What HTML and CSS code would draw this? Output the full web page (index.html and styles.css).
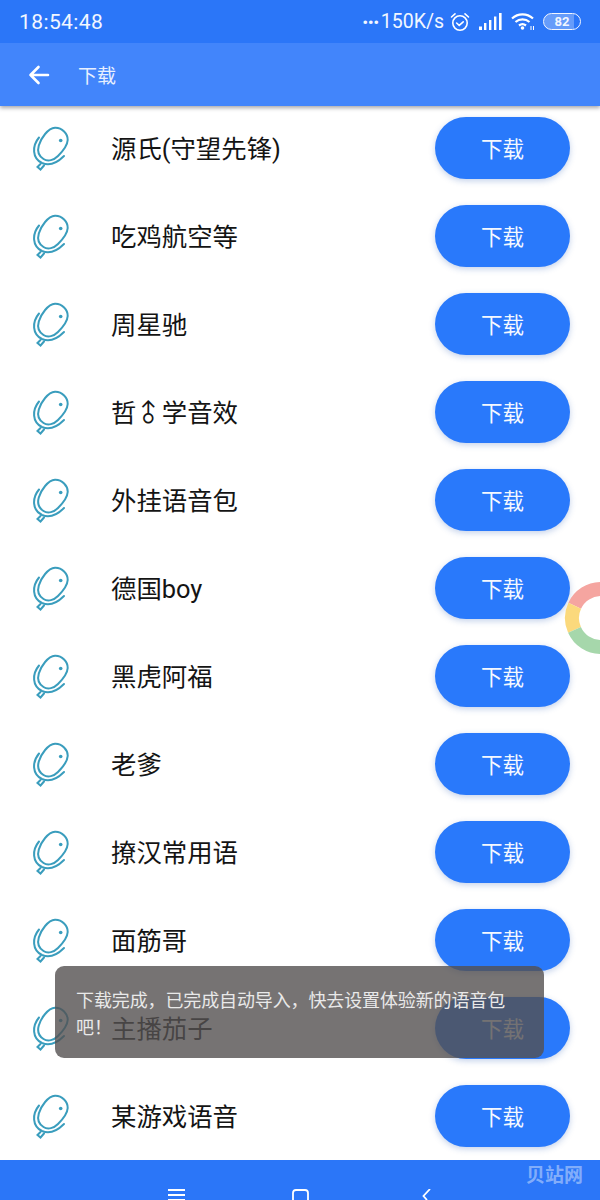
FILE: index.html
```html
<!DOCTYPE html>
<html lang="zh">
<head>
<meta charset="utf-8">
<title>下载</title>
<link rel="stylesheet" href="styles.css">
</head>
<body>
<svg class="defs" width="0" height="0" aria-hidden="true">
  <symbol id="mic" viewBox="0 0 40 45">
    <g fill="none" stroke="#3a9dbd" stroke-width="2" stroke-linecap="round">
      <path d="M25 1.800C32 1.500 38 8 37.700 14C37.400 20 33 25 28 30C24 34 18 36 13.500 33C8 29.500 7.500 24 8.800 19.500C11 12 18 2.200 25 1.800Z"/>
      <path d="M9 11.500C2 20 2 32 12 37C20 40.500 28 36 34 30"/>
      <path d="M10.500 38L7.500 41L10.500 43.500L14 39.500"/>
    </g>
    <circle cx="30.700" cy="14.500" r="1.800" fill="#3a9dbd"/>
  </symbol>
</svg>
<div class="page">
  <header class="header">
    <div class="status">
      <span class="time">18:54:48</span>
      <div class="status-right">
        <span class="speed"><b class="dots">•••</b>150K/s</span>
        <svg class="alarm" width="20" height="20" viewBox="0 0 20 20" fill="none" stroke="#fff" stroke-width="1.600" stroke-linecap="round">
          <circle cx="10" cy="11" r="7.200"/>
          <path d="M6.600 11l2.600 2.400 4-3.600"/>
          <path d="M1.500 5L5 1.800M18.500 5L15 1.800"/>
        </svg>
        <svg class="signal" width="23" height="17" viewBox="0 0 23 17" fill="#fff">
          <rect x="0" y="13.500" width="3" height="3.500"/>
          <rect x="5" y="10" width="2.400" height="7"/>
          <rect x="10" y="7" width="2.400" height="10"/>
          <rect x="15" y="3.500" width="2.400" height="13.500"/>
          <rect x="20" y="0" width="2.600" height="17"/>
        </svg>
        <svg class="wifi" width="24" height="19" viewBox="0 0 24 19" fill="none" stroke="#fff" stroke-width="2.200">
          <path d="M1 6.500C7 1 16 1 22 6.500"/>
          <path d="M4.500 10C8.500 6.500 14.500 6.500 18.500 10"/>
          <path d="M8 13.500C10 12 13 12 15 13.500"/>
          <circle cx="11.500" cy="16" r="1.800" fill="#fff" stroke="none"/>
          <path d="M20 14v4M22.500 14v4" stroke-width="1"/>
        </svg>
        <span class="battery"><span class="battery-num">82</span></span>
      </div>
    </div>
    <div class="toolbar">
      <svg class="back" width="22" height="20" viewBox="0 0 22 20" fill="none" stroke="#fff" stroke-width="2.600" stroke-linecap="round" stroke-linejoin="round">
        <path d="M20 10H2.500M10.500 2L2.500 10l8 8"/>
      </svg>
      <span class="title">下载</span>
    </div>
  </header>

  <main class="list">
    <div class="row"><svg class="mic"><use href="#mic"/></svg><span class="name">源氏(守望先锋)</span><span class="btn">下载</span></div>
    <div class="row"><svg class="mic"><use href="#mic"/></svg><span class="name">吃鸡航空等</span><span class="btn">下载</span></div>
    <div class="row"><svg class="mic"><use href="#mic"/></svg><span class="name">周星驰</span><span class="btn">下载</span></div>
    <div class="row"><svg class="mic"><use href="#mic"/></svg><span class="name">哲<span class="male">♂</span>学音效</span><span class="btn">下载</span></div>
    <div class="row"><svg class="mic"><use href="#mic"/></svg><span class="name">外挂语音包</span><span class="btn">下载</span></div>
    <div class="row"><svg class="mic"><use href="#mic"/></svg><span class="name">德国boy</span><span class="btn">下载</span></div>
    <div class="row"><svg class="mic"><use href="#mic"/></svg><span class="name">黑虎阿福</span><span class="btn">下载</span></div>
    <div class="row"><svg class="mic"><use href="#mic"/></svg><span class="name">老爹</span><span class="btn">下载</span></div>
    <div class="row"><svg class="mic"><use href="#mic"/></svg><span class="name">撩汉常用语</span><span class="btn">下载</span></div>
    <div class="row"><svg class="mic"><use href="#mic"/></svg><span class="name">面筋哥</span><span class="btn">下载</span></div>
    <div class="row"><svg class="mic"><use href="#mic"/></svg><span class="name">主播茄子</span><span class="btn">下载</span></div>
    <div class="row"><svg class="mic"><use href="#mic"/></svg><span class="name">某游戏语音</span><span class="btn">下载</span></div>
  </main>

  <nav class="nav">
    <svg class="nav-menu" width="17" height="11" viewBox="0 0 17 11" fill="none" stroke="#fff" stroke-width="1.800">
      <path d="M0 1h17M0 6h17M0 11h17"/>
    </svg>
    <svg class="nav-home" width="17" height="11" viewBox="0 0 17 11" fill="none" stroke="#fff" stroke-width="1.800">
      <path d="M1 11V4Q1 1 4 1h9q3 0 3 3v7"/>
    </svg>
    <svg class="nav-back" width="9" height="11" viewBox="0 0 9 11" fill="none" stroke="#fff" stroke-width="1.800">
      <path d="M8 0L1.500 7L5 11"/>
    </svg>
  </nav>

  <div class="toast">下载完成，已完成自动导入，快去设置体验新的语音包吧！</div>

  <svg class="ring" width="36" height="76" viewBox="0 0 36 76" fill="none" stroke-width="14">
    <path d="M10.700 25.700A29 29 0 0 1 37 9" stroke="#f5a5a0"/>
    <path d="M10.500 49.800A29 29 0 0 1 10.700 25.700" stroke="#fbd97c"/>
    <path d="M37 67A29 29 0 0 1 10.500 49.800" stroke="#a6d7ab"/>
  </svg>

  <span class="mark">贝站网</span>
</div>
</body>
</html>
```

FILE: styles.css
```css
* {
  box-sizing: border-box;
}

html,
body {
  margin: 0;
  padding: 0;
  background: #fff;
}

body {
  font-family: "Noto Sans CJK SC", "Noto Sans", sans-serif;
}

.defs {
  display: block;
  height: 0;
}

.page {
  position: relative;
  width: 600px;
  height: 1200px;
  overflow: hidden;
  display: flex;
  flex-direction: column;
  background: #fff;
}

.header {
  position: relative;
  z-index: 2;
  flex: none;
  height: 106px;
  margin-bottom: -2px;
  box-shadow: 0 2px 4px rgba(60, 60, 70, 0.45);
}

.status {
  height: 43px;
  background: #2b76f8;
  color: #f2f6ff;
  display: flex;
  align-items: center;
  padding: 0 19px;
  justify-content: space-between;
}

.time {
  font-family: Roboto, sans-serif;
  font-size: 21px;
  letter-spacing: 0.4px;
}

.status-right {
  display: flex;
  align-items: center;
}

.speed {
  font-family: Roboto, sans-serif;
  font-size: 19.500px;
  margin-right: 6px;
}

.dots {
  font-size: 15px;
  margin-right: 2px;
}

.alarm {
  margin-right: 9px;
}

.signal {
  margin-right: 9px;
}

.wifi {
  margin-right: 8px;
}

.battery {
  width: 38px;
  height: 17px;
  border: 1.5px solid #f2f6ff;
  border-radius: 9px;
  display: flex;
  align-items: center;
  justify-content: center;
  background: linear-gradient(90deg, rgba(255, 255, 255, 0.28) 82%, transparent 82%);
}

.battery-num {
  font-family: Roboto, sans-serif;
  font-size: 13px;
  font-weight: 700;
  line-height: 1;
}

.toolbar {
  height: 63px;
  background: #4285fb;
  display: flex;
  align-items: center;
  padding-left: 28px;
}

.back {
  flex: none;
}

.title {
  margin-left: 28px;
  font-size: 19px;
  color: #e8f0ff;
}

.list {
  flex: none;
}

.row {
  height: 88px;
  display: flex;
  align-items: center;
  padding: 0 30px;
}

.mic {
  flex: none;
  width: 40px;
  height: 45px;
}

.name {
  margin-left: 41px;
  padding-top: 2px;
  font-family: Roboto, "Noto Sans CJK SC", sans-serif;
  font-size: 25.4px;
  line-height: 36px;
  color: #141414;
  white-space: nowrap;
}

.male {
  display: inline-block;
  transform: rotate(-45deg) scale(0.95);
}

.btn {
  margin-left: auto;
  width: 135px;
  height: 62px;
  padding-bottom: 2px;
  border-radius: 31px;
  background: #2979fb;
  color: #f4f8ff;
  font-size: 21.500px;
  display: flex;
  align-items: center;
  justify-content: center;
  box-shadow: 0 2px 6px rgba(40, 90, 180, 0.28);
}

.nav {
  flex: 1;
  background: #2b76f8;
  display: flex;
  align-items: flex-start;
  padding: 29px 0 0 168px;
}

.nav-home {
  margin-left: 107px;
}

.nav-back {
  margin-left: 113px;
}

.toast {
  position: absolute;
  z-index: 3;
  left: 55px;
  top: 966px;
  width: 489px;
  height: 92px;
  padding: 20px 24px 20px 21px;
  border-radius: 9px;
  background: rgba(84, 80, 80, 0.8);
  color: #e9e9e9;
  font-size: 18px;
  letter-spacing: -0.12px;
  line-height: 27px;
}

.ring {
  position: absolute;
  z-index: 1;
  right: 0;
  top: 580px;
}

.mark {
  position: absolute;
  z-index: 4;
  left: 526px;
  top: 1161px;
  font-size: 19px;
  line-height: 26px;
  font-weight: 700;
  color: rgba(255, 255, 255, 0.42);
}
```
